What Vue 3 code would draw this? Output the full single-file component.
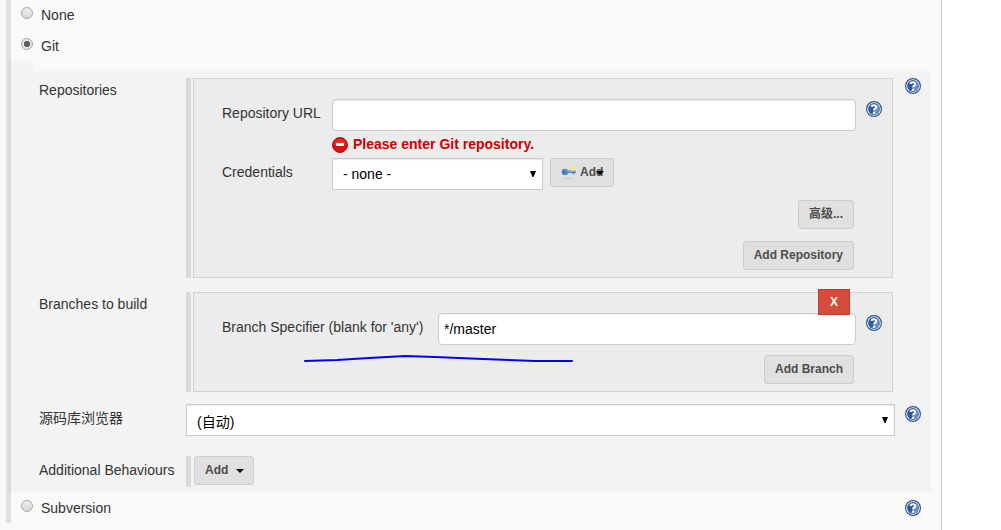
<script setup>
import { ref, h } from 'vue'

const scm = ref('git')
const url = ref('')
const credentials = ref('none')
const branch = ref('*/master')
const browser = ref('auto')

const HelpIcon = () =>
  h('svg', { viewBox: '0 0 16 16', width: 16, height: 16, 'aria-hidden': 'true' }, [
    h('circle', { cx: 8, cy: 8, r: 7.4, fill: '#fff', stroke: '#30568f', 'stroke-width': 1.2 }),
    h('circle', { cx: 8, cy: 8, r: 5.9, fill: '#2f5a9c' }),
    h('path', { d: 'M11 3a5.9 5.9 0 0 1-6 10.1Q10.500 10 11 3z', fill: '#6a8fc2' }),
    h('path', { d: 'M11 3a5.900 5.900 0 0 1 0 10l-2 .8Q11.500 8 11 3z', fill: '#6a8fc2' }),
    h('path', { d: 'M5.600 5.900Q5.800 4.300 8 4.300Q10.200 4.300 10.200 6Q10.200 7 9.100 7.700Q8.100 8.300 8.100 9.500', fill: 'none', stroke: '#fff', 'stroke-width': 2 }),
    h('rect', { x: 7, y: 10.7, width: 2.200, height: 2, fill: '#fff' })
  ])
</script>

<template>
  <main class="panel">
    <div class="scm">
      <label class="choice first">
        <input v-model="scm" type="radio" name="scm" value="none" /><span>None</span>
      </label>
      <label class="choice">
        <input v-model="scm" type="radio" name="scm" value="git" /><span>Git</span>
      </label>

      <section class="git">
        <div class="row">
          <div class="name">Repositories</div>
          <div class="chunk">
            <div class="box">
              <div class="field">
                <label class="short" for="url">Repository URL</label>
                <input id="url" v-model="url" class="text" type="text" />
                <button class="help" type="button" aria-label="Help"><HelpIcon /></button>
              </div>
              <div class="error">
                <svg viewBox="0 0 16 16" width="16" height="16" aria-hidden="true">
                  <circle cx="8" cy="8" r="7.5" fill="#dc1010" stroke="#b20c0c" />
                  <path d="M2 8a6 6 0 0 1 12 0" fill="#e42a2a" />
                  <rect x="4" y="6" width="8" height="3" rx="0.5" fill="#fff" />
                </svg>
                <span>Please enter Git repository.</span>
              </div>
              <div class="field">
                <label class="short" for="cred">Credentials</label>
                <div class="select cred">
                  <select id="cred" v-model="credentials"><option value="none">- none -</option></select>
                  <svg class="arrow" viewBox="0 0 6 6" width="6" height="6"><path d="M0 0h6L3.5 6h-1z" /></svg>
                </div>
                <button class="btn key" type="button">
                  <svg viewBox="0 0 16 16" width="16" height="16" aria-hidden="true">
                    <ellipse cx="7" cy="14.500" rx="5.500" ry="0.800" fill="#cbcbcb" />
                    <circle cx="12.500" cy="4" r="2.200" fill="#f8ee5a" />
                    <path d="M0.700 8Q0.700 4.700 4 4.700Q6.700 4.700 7.500 6.700H14.700V9H13.500V10.200H11.500V9H7.500Q6.700 11.300 4 11.300Q0.700 11.300 0.700 8z" fill="#5486c0" />
                    <path d="M4 6.300H7.500L14 7.400V8H7.500z" fill="#85abd8" />
                    <ellipse cx="2.700" cy="8" rx="0.900" ry="1.300" fill="#35659f" />
                  </svg>
                  <span>Add</span>
                  <svg class="over" viewBox="0 0 8 4" width="8" height="4"><path d="M0 0h8L4 4z" /></svg>
                </button>
              </div>
              <div class="actions advanced"><button class="btn" type="button">高级...</button></div>
              <div class="actions"><button class="btn" type="button">Add Repository</button></div>
            </div>
          </div>
          <button class="help" type="button" aria-label="Help"><HelpIcon /></button>
        </div>

        <div class="row">
          <div class="name">Branches to build</div>
          <div class="chunk wide">
            <div class="box">
              <button class="delete" type="button">X</button>
              <div class="field">
                <label class="long" for="branch">Branch Specifier (blank for 'any')</label>
                <input id="branch" v-model="branch" class="text" type="text" />
                <button class="help" type="button" aria-label="Help"><HelpIcon /></button>
              </div>
              <svg class="stroke" viewBox="0 0 272 10" width="272" height="10" aria-hidden="true">
                <path d="M2 7L34 6L66 4L102 2L132 3L180 5L232 7L269 7" />
              </svg>
              <div class="actions branch"><button class="btn" type="button">Add Branch</button></div>
            </div>
          </div>
        </div>

        <div class="row browser">
          <label class="name" for="browser">源码库浏览器</label>
          <div class="select">
            <select id="browser" v-model="browser"><option value="auto">(自动)</option></select>
            <svg class="arrow" viewBox="0 0 6 6" width="6" height="6"><path d="M0 0h6L3.5 6h-1z" /></svg>
          </div>
          <button class="help" type="button" aria-label="Help"><HelpIcon /></button>
        </div>

        <div class="row extra">
          <div class="name">Additional Behaviours</div>
          <div class="chunk slim">
            <button class="btn menu" type="button">
              Add
              <svg viewBox="0 0 8 4" width="8" height="4"><path d="M0 0h8L4 4z" /></svg>
            </button>
          </div>
        </div>
      </section>

      <div class="last">
        <label class="choice">
          <input v-model="scm" type="radio" name="scm" value="svn" /><span>Subversion</span>
        </label>
        <button class="help" type="button" aria-label="Help"><HelpIcon /></button>
      </div>
    </div>
  </main>
</template>

<style>
body {
  background: #fff;
}
</style>

<style scoped>
.panel,
.panel * {
  box-sizing: border-box;
}
.panel {
  min-height: 100vh;
  margin-right: 59px;
  padding: 0 10px 7px 6px;
  background: #f9f9f9;
  border-right: 1px solid #c6c6c6;
  font: 14px/20px "Liberation Sans", "Noto Sans CJK SC", sans-serif;
  color: #333;
}
.scm {
  border-left: 5px solid #e0e0e0;
}
button,
input,
select {
  margin: 0;
  font-family: inherit;
}
.choice {
  display: flex;
  align-items: center;
  height: 31px;
  padding-left: 10px;
}
.choice.first {
  height: 30px;
}
.choice input {
  appearance: none;
  width: 12px;
  height: 12px;
  margin: 0 8px 4px 0;
  border: 1px solid #a8a8a8;
  border-radius: 50%;
  background: linear-gradient(#eee, #d8d8d8);
}
.choice input:checked {
  background: radial-gradient(circle, #5c5c5c 0 2px, #6b6b6b 3px, #e6e6e6 3px);
}
.git {
  position: relative;
  display: flex;
  flex-direction: column;
  gap: 14px;
  margin: 10px 0 0 -3px;
  padding: 7px 10px 5px 31px;
  background: rgba(0, 0, 0, 0.025);
}
.git::before {
  content: "";
  position: absolute;
  left: 0;
  top: -10px;
  width: 26px;
  height: 10px;
  background: rgba(0, 0, 0, 0.025);
}
.row {
  display: flex;
  align-items: flex-start;
}
.name {
  flex: 0 0 147px;
  padding-top: 2px;
  white-space: nowrap;
}
.chunk {
  flex: 1;
  padding-left: 2px;
  margin-right: 12px;
  border-left: 5px solid #dadada;
}
.chunk.wide {
  margin-right: 28px;
}
.box {
  position: relative;
  padding: 20px 10px 7px 28px;
  background: #ececec;
  border: 1px solid #d2d2d2;
}
.field {
  display: flex;
  align-items: flex-start;
}
.short,
.long {
  flex: 0 0 110px;
  padding-top: 4px;
  white-space: nowrap;
}
.long {
  flex-basis: 216px;
}
.text {
  flex: 1;
  min-width: 0;
  height: 32px;
  margin-right: 10px;
  padding: 0 5px;
  border: 1px solid #ccc;
  border-radius: 4px;
  background: #fff;
  color: #000;
  font-size: 14px;
  box-shadow: inset 0 1px 1px rgba(0, 0, 0, 0.08);
}
.help {
  flex: none;
  width: 16px;
  height: 16px;
  padding: 0;
  border: 0;
  background: none;
}
.field .help {
  margin-top: 2px;
}
.help svg,
.error svg {
  display: block;
}
.error {
  display: flex;
  align-items: center;
  gap: 5px;
  height: 16px;
  margin: 6px 0 5px 110px;
  color: #c00;
  font-weight: bold;
}
.error span {
  margin-bottom: 2px;
}
.select {
  position: relative;
  flex: 1;
}
.select.cred {
  flex: 0 0 211px;
  margin-right: 7px;
}
.select select {
  appearance: none;
  display: block;
  width: 100%;
  height: 32px;
  padding: 0 10px;
  border: 1px solid #ccc;
  border-radius: 0;
  background: #fff;
  color: #000;
  font-size: 14px;
  box-shadow: inset 0 1px 1px rgba(0, 0, 0, 0.08);
}
.arrow {
  position: absolute;
  right: 7px;
  top: 13px;
  pointer-events: none;
}
.btn {
  height: 29px;
  padding: 0 10px 2px;
  border: 1px solid #ccc;
  border-radius: 3px;
  background: #e0e0e0;
  color: #4d4d4d;
  font-size: 12px;
  line-height: 16px;
  font-weight: bold;
}
.key {
  position: relative;
  display: flex;
  align-items: center;
  gap: 3px;
}
.over {
  position: absolute;
  right: 9px;
  top: 12px;
}
.actions {
  display: flex;
  justify-content: flex-end;
  margin: 12px 28px 0 0;
}
.advanced {
  margin-top: 10px;
}
.branch {
  margin-top: 10px;
}
.delete {
  position: absolute;
  right: 42px;
  top: -4px;
  width: 32px;
  height: 26px;
  padding: 0;
  border: 1px solid #c23a2b;
  background: #d54c3c;
  color: #f5f5f5;
  font-size: 12px;
  font-weight: bold;
}
.stroke {
  position: absolute;
  left: 109px;
  top: 61px;
}
.stroke path {
  fill: none;
  stroke: #00f;
  stroke-width: 2;
  stroke-linecap: round;
  stroke-linejoin: round;
}
.browser {
  margin-top: -2px;
}
.browser .name {
  padding-top: 4px;
}
.browser select {
  padding-top: 3px;
}
.browser .help {
  margin: 2px 0 0 10px;
}
.extra {
  margin-top: 6px;
}
.extra .name {
  padding-top: 4px;
}
.slim {
  height: 31px;
  padding-left: 3px;
}
.menu {
  display: flex;
  align-items: center;
  gap: 8px;
  padding-right: 9px;
}
.menu svg {
  margin-top: 2px;
}
.last {
  display: flex;
  align-items: center;
  justify-content: space-between;
  padding-right: 10px;
}
</style>
